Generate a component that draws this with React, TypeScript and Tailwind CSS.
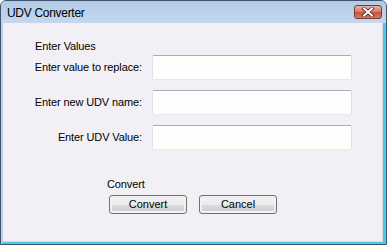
import React from "react";

const font = { fontFamily: '"Liberation Sans", Arial, sans-serif' };

function Field({ label }: { label: string }) {
  return (
    <div className="flex items-center h-[25px]">
      <div className="w-[139px] text-right text-[11px] leading-[13px] tracking-[-0.12px] text-black">{label}</div>
      <div className="ml-[10px] w-[200px] h-[25px] rounded-[2px] bg-[#fcfffc] border border-t-[#abadb3] border-l-[#e2e3ea] border-r-[#dbdfe6] border-b-[#e3e9ef]" />
    </div>
  );
}

function Btn({ children }: { children: React.ReactNode }) {
  return (
    <div className="w-[78px] h-[19px] rounded-[3px] border border-[#707070] p-px">
      <div className="w-full h-full rounded-[2px] flex items-center justify-center text-[11px] leading-[13px] text-black bg-[linear-gradient(#f2f2f2_0%,#ebebeb_50%,#dddddd_51%,#cfcfcf_100%)] border border-[#fbfbfb]/60">
        {children}
      </div>
    </div>
  );
}

export default function App() {
  return (
    <div className="w-[387px] h-[245px] bg-white" style={font}>
      <div className="w-full h-full flex flex-col border border-[#43536c] rounded-t-[6px] overflow-hidden bg-[#b9d1ea]">
        <div className="h-[22px] flex items-center pl-[6px] pr-[4px] bg-[linear-gradient(#b1cbe7,#c4d8ee)]">
          <div className="text-[12px] leading-[14px] text-black pt-[1px] tracking-[-0.3px]">UDV Converter</div>
          <div className="flex-1" />
          <div className="self-start mt-[4px] w-[28px] h-[14px] rounded-[3px] border border-[#7a3a30] bg-[linear-gradient(#eab3a6_0%,#d98070_45%,#c75240_55%,#d57a66_100%)] flex items-center justify-center">
            <svg width="14" height="10" viewBox="0 0 14 10">
              <path d="M3 1.5 L11 8.5 M11 1.5 L3 8.5" stroke="#5a2018" strokeWidth="3.6" strokeLinecap="square" />
              <path d="M3 1.5 L11 8.5 M11 1.5 L3 8.5" stroke="#ffffff" strokeWidth="2" strokeLinecap="square" />
            </svg>
          </div>
        </div>
        <div className="flex-1 flex border-l-2 border-l-[#b9d1ea] border-r-[3px] border-r-[#4ccaee] border-b-2 border-b-[#4ccaee]">
          <div className="flex-1 bg-[#f2f0f4] border-r border-b border-[#d8d8dc] pt-[17px]">
            <div className="pl-[32px] text-[11px] leading-[13px] tracking-[-0.12px] text-black">Enter Values</div>
            <div className="mt-[2px] flex flex-col gap-[10px]">
              <Field label="Enter value to replace:" />
              <Field label="Enter new UDV name:" />
              <Field label="Enter UDV Value:" />
            </div>
            <div className="mt-[28px] pl-[104px] text-[11px] leading-[13px] tracking-[-0.12px] text-black">Convert</div>
            <div className="mt-[4px] pl-[106px] flex gap-[12px]">
              <Btn>Convert</Btn>
              <Btn>Cancel</Btn>
            </div>
          </div>
        </div>
      </div>
    </div>
  );
}
